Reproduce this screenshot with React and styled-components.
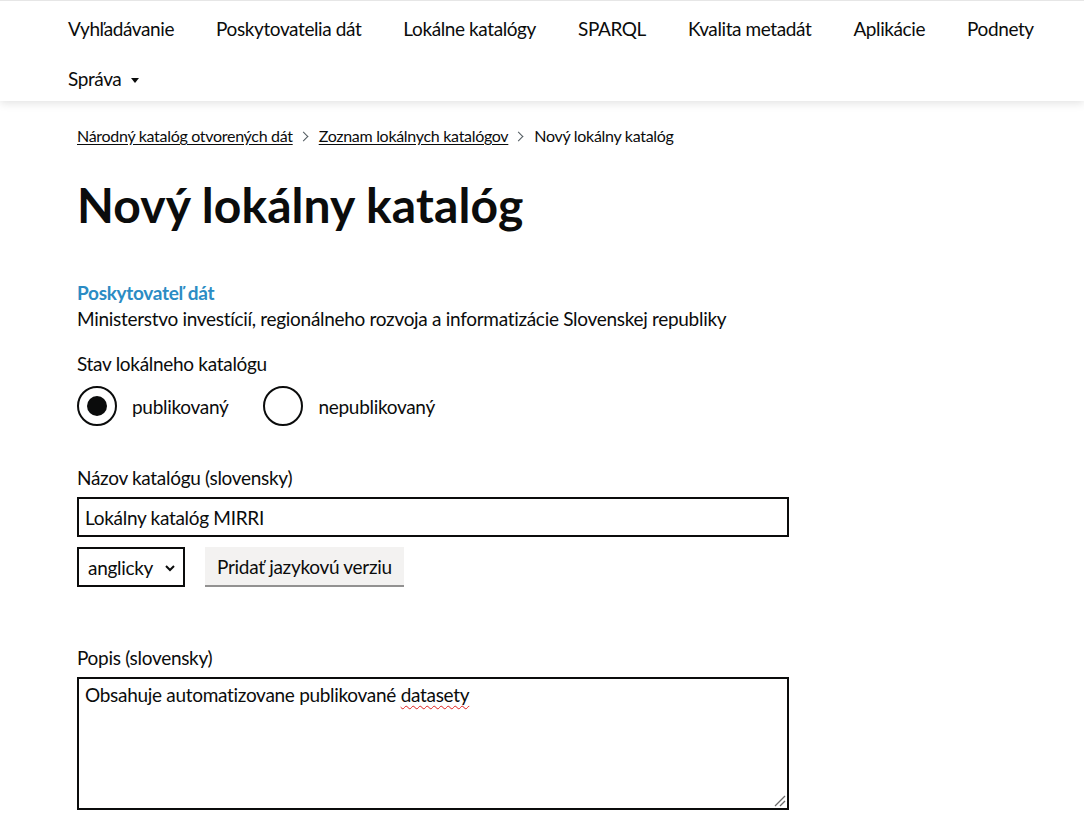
import styled, { createGlobalStyle } from 'styled-components';

const GlobalStyle = createGlobalStyle`
  body {
    margin: 0;
    background: #fff;
    color: #0b0c0c;
    font-family: Lato, "Noto Sans", sans-serif;
    font-size: 19px;
    letter-spacing: -0.3px;
  }
  * { box-sizing: border-box; }
`;

const Header = styled.header`
  border-top: 1px solid #e6e6e6;
  background: #fff;
  box-shadow: 0 2px 9px rgba(0, 0, 0, 0.12);
  position: relative;
`;

const NavList = styled.ul`
  display: flex;
  flex-wrap: wrap;
  list-style: none;
  margin: 0;
  padding: 0 0 0 47px;
`;

const NavItem = styled.li`
  display: flex;
  align-items: center;
  padding: 16px 21px 10px;
  line-height: 24px;
  white-space: nowrap;
  letter-spacing: -0.4px;
`;

const Caret = styled.span`
  display: inline-block;
  margin: 2px 0 0 10px;
  border-left: 4px solid transparent;
  border-right: 4px solid transparent;
  border-top: 5px solid #0b0c0c;
`;

const Main = styled.main`
  padding: 25px 0 40px 77px;
`;

const Crumbs = styled.ol`
  display: flex;
  list-style: none;
  margin: 0;
  padding: 0;
  font-size: 16px;
  line-height: 20px;
  letter-spacing: -0.3px;
`;

const Crumb = styled.li`
  display: flex;
  align-items: center;
  a {
    color: #0b0c0c;
    text-decoration: underline;
    text-underline-offset: 2px;
  }
`;

const Chevron = styled.span`
  display: inline-block;
  width: 7px;
  height: 7px;
  margin: 0 12px 0 7px;
  border-top: 1px solid #505a5f;
  border-right: 1px solid #505a5f;
  transform: rotate(45deg);
`;

const Title = styled.h1`
  margin: 34px 0 50px;
  font-size: 48px;
  line-height: 50px;
  font-weight: 700;
  letter-spacing: 0.1px;
`;

const Provider = styled.div`
  line-height: 26px;
  margin-bottom: 19px;
`;

const ProviderLabel = styled.div`
  color: #2b8cc4;
  font-weight: 700;
`;

const Label = styled.div`
  line-height: 25px;
  margin-bottom: ${(p) => p.$gap || 7}px;
`;

const RadioRow = styled.div`
  display: flex;
  margin-bottom: 39px;
`;

const RadioItem = styled.label`
  display: flex;
  align-items: center;
  margin-right: 20px;
`;

const RadioCircle = styled.span`
  width: 40px;
  height: 40px;
  border: 2px solid #0b0c0c;
  border-radius: 50%;
  display: flex;
  align-items: center;
  justify-content: center;
  &::after {
    content: '';
    width: 20px;
    height: 20px;
    border-radius: 50%;
    background: #0b0c0c;
    display: ${(p) => (p.$checked ? 'block' : 'none')};
  }
`;

const RadioText = styled.span`
  padding: 0 15px;
`;

const TextInput = styled.input`
  display: block;
  width: 712px;
  height: 40px;
  border: 2px solid #0b0c0c;
  border-radius: 0;
  padding: 5px 6px;
  font: inherit;
  letter-spacing: inherit;
  color: #0b0c0c;
  outline: none;
`;

const LangRow = styled.div`
  display: flex;
  gap: 20px;
  margin: 10px 0 58px;
`;

const SelectWrap = styled.div`
  position: relative;
  width: 108px;
  height: 40px;
`;

const Select = styled.select`
  appearance: none;
  width: 100%;
  height: 100%;
  border: 2px solid #0b0c0c;
  border-radius: 0;
  background: #fff;
  padding: 0 22px 0 9px;
  font: inherit;
  letter-spacing: inherit;
  color: #0b0c0c;
`;

const SelectArrow = styled.svg`
  position: absolute;
  right: 9px;
  top: 17px;
  pointer-events: none;
`;

const Button = styled.button`
  height: 38px;
  padding: 0 12px;
  border: 0;
  border-radius: 0;
  background: #f3f2f1;
  box-shadow: 0 2px 0 #929191;
  font: inherit;
  letter-spacing: inherit;
  color: #0b0c0c;
`;

const TextArea = styled.div`
  position: relative;
  width: 712px;
  height: 133px;
  border: 2px solid #0b0c0c;
  padding: 3px 6px;
  line-height: 25px;
`;

const Misspelled = styled.span`
  text-decoration: underline wavy #e0201b;
  text-decoration-thickness: 1px;
  text-underline-offset: 3px;
`;

const Grip = styled.svg`
  position: absolute;
  right: 1px;
  bottom: 1px;
`;

const navItems = [
  'Vyhľadávanie',
  'Poskytovatelia dát',
  'Lokálne katalógy',
  'SPARQL',
  'Kvalita metadát',
  'Aplikácie',
  'Podnety',
];

export default function App() {
  return (
    <>
      <GlobalStyle />
      <Header>
        <nav>
          <NavList>
            {navItems.map((item) => (
              <NavItem key={item}>{item}</NavItem>
            ))}
            <NavItem>
              Správa
              <Caret />
            </NavItem>
          </NavList>
        </nav>
      </Header>
      <Main>
        <Crumbs>
          <Crumb>
            <a href="#">Národný katalóg otvorených dát</a>
            <Chevron />
          </Crumb>
          <Crumb>
            <a href="#">Zoznam lokálnych katalógov</a>
            <Chevron />
          </Crumb>
          <Crumb>Nový lokálny katalóg</Crumb>
        </Crumbs>
        <Title>Nový lokálny katalóg</Title>

        <Provider>
          <ProviderLabel>Poskytovateľ dát</ProviderLabel>
          <div>Ministerstvo investícií, regionálneho rozvoja a informatizácie Slovenskej republiky</div>
        </Provider>

        <Label $gap={10}>Stav lokálneho katalógu</Label>
        <RadioRow>
          <RadioItem>
            <RadioCircle $checked />
            <RadioText>publikovaný</RadioText>
          </RadioItem>
          <RadioItem>
            <RadioCircle />
            <RadioText>nepublikovaný</RadioText>
          </RadioItem>
        </RadioRow>

        <Label>Názov katalógu (slovensky)</Label>
        <TextInput defaultValue="Lokálny katalóg MIRRI" />
        <LangRow>
          <SelectWrap>
            <Select defaultValue="en">
              <option value="en">anglicky</option>
            </Select>
            <SelectArrow width="12" height="8" viewBox="0 0 12 8">
              <path d="M2 2l4 4 4-4" fill="none" stroke="#0b0c0c" strokeWidth="2" />
            </SelectArrow>
          </SelectWrap>
          <Button>Pridať jazykovú verziu</Button>
        </LangRow>

        <Label>Popis (slovensky)</Label>
        <TextArea>
          Obsahuje automatizovane publikované <Misspelled>datasety</Misspelled>
          <Grip width="12" height="12" viewBox="0 0 12 12">
            <line x1="1" y1="11" x2="11" y2="1" stroke="#6b6b6b" strokeWidth="1.2" />
            <line x1="6" y1="11" x2="11" y2="6" stroke="#6b6b6b" strokeWidth="1.2" />
          </Grip>
        </TextArea>
      </Main>
    </>
  );
}
